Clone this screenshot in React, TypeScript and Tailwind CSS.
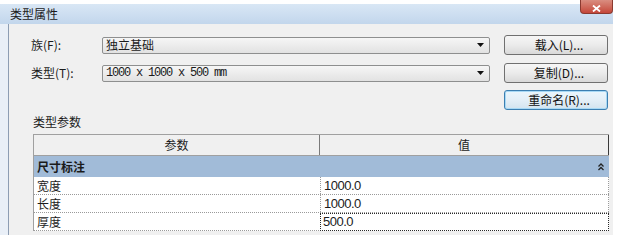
const cjk = "font-['Noto_Sans_CJK_SC','Noto_Sans_CJK_JP',sans-serif]";

function DropArrow() {
  return (
    <svg width="7" height="4" viewBox="0 0 7 4" className="shrink-0">
      <path d="M0 0h7L3.5 4z" fill="#111" />
    </svg>
  );
}

function Collapse() {
  return (
    <svg width="6" height="8" viewBox="0 0 6 8" className="shrink-0">
      <path d="M0.5 3.5L3 1l2.5 2.5M0.5 7L3 4.5 5.5 7" fill="none" stroke="#222" strokeWidth="1.3" />
    </svg>
  );
}

function Combo({ children }: { children: React.ReactNode }) {
  return (
    <div className="flex h-[17px] w-[388px] items-center justify-between rounded-[2px] border border-[#8e8f8f] bg-gradient-to-b from-[#f6f6f6] to-[#e2e2e2] pl-[3px] pr-[5px]">
      {children}
      <DropArrow />
    </div>
  );
}

function Btn({ label, focused }: { label: string; focused?: boolean }) {
  return (
    <div
      className={
        focused
          ? "flex h-[20px] w-[104px] items-center justify-center rounded-[3px] border border-[#3c7fb1] bg-gradient-to-b from-[#eaf6fd] via-[#e4eff7] to-[#d3e4ef] shadow-[inset_0_0_0_1px_#a8d9f5] text-[12px] text-[#111]"
          : "flex h-[20px] w-[104px] items-center justify-center rounded-[3px] border border-[#707070] bg-gradient-to-b from-[#f6f6f6] via-[#ebebeb] to-[#d9d9d9] text-[12px] text-[#111]"
      }
    >
      <span className="pl-[6px]">{label}</span>
    </div>
  );
}

const rows = [
  { name: "宽度", value: "1000.0" },
  { name: "长度", value: "1000.0" },
  { name: "厚度", value: "500.0" },
];

export default function App() {
  return (
    <div className={`relative h-[243px] w-[626px] overflow-hidden bg-white ${cjk}`}>
      <div className="mt-[4px] w-[613px]">
        {/* title bar */}
        <div className="relative flex h-[20px] items-center bg-gradient-to-b from-[#d9e7f5] to-[#c2d6ec] pl-[10px] text-[12px] text-[#1b1b1b]">
          类型属性
        </div>

        {/* frame + body */}
        <div className="flex h-[211px] bg-[#e9eff7]">
          <div className="ml-[8px] flex-1 border-l border-[#8d9db3] bg-[#f0f0f0] pl-[22px] pt-[11px] text-[12px] text-[#1b1b1b]">
            <div className="grid grid-cols-[57px_388px_104px] items-center gap-x-[14px]">
              <span>族(F):</span>
              <Combo>
                <span>独立基础</span>
              </Combo>
              <Btn label="载入(L)..." />

              <span className="mt-[8px]">类型(T):</span>
              <div className="mt-[8px]">
                <Combo>
                  <span className="font-['Liberation_Mono',monospace] tracking-[-1.2px]">1000 x 1000 x 500 mm</span>
                </Combo>
              </div>
              <div className="mt-[8px]">
                <Btn label="复制(D)..." />
              </div>

              <span />
              <span />
              <div className="mt-[7px]">
                <Btn label="重命名(R)..." focused />
              </div>
            </div>

            <div className="ml-[2px] mt-[4px] h-[16px] leading-[16px]">类型参数</div>

            {/* parameter table */}
            <div className="ml-[2px] mt-[4px] w-[576px] border-l border-[#a0a0a0]">
              <div className="flex h-[22px] border-y border-[#a0a0a0] bg-[#f0f0f0]">
                <div className="flex w-[286px] items-center justify-center border-r border-[#7a7a7a]">参数</div>
                <div className="flex flex-1 items-center justify-center border-r border-[#3a3a3a]">值</div>
              </div>
              <div className="flex h-[21px] items-center justify-between bg-[#a1bbd8] pl-[3px] pr-[5px] font-bold">
                <span>尺寸标注</span>
                <Collapse />
              </div>
              {rows.map((r, i) => (
                <div key={r.name} className="flex h-[18px] border-b border-dotted border-[#9a9a9a] bg-white">
                  <div className="flex w-[286px] items-center pl-[3px]">{r.name}</div>
                  <div
                    className={
                      i === rows.length - 1
                        ? "-mb-px flex flex-1 items-center border border-dotted border-[#2a2a2a] pl-[2px] font-['Liberation_Sans',sans-serif] text-[13px] tracking-[-0.5px]"
                        : "flex flex-1 items-center border-x border-dotted border-[#9a9a9a] pl-[3px] font-['Liberation_Sans',sans-serif] text-[13px] tracking-[-0.5px]"
                    }
                  >
                    {r.value}
                  </div>
                </div>
              ))}
            </div>
          </div>
        </div>
      </div>

      {/* close button */}
      <div className="absolute left-[580px] top-0 flex h-[14px] w-[33px] items-end justify-center rounded-b-[4px] border border-t-0 border-[#8b3a30] bg-gradient-to-b from-[#d98d80] to-[#c4463a] pb-[1px]">
        <svg width="9" height="7" viewBox="0 0 9 7">
          <path d="M1 0.5l7 6M8 0.5l-7 6" stroke="#fff" strokeWidth="1.8" />
        </svg>
      </div>
    </div>
  );
}
